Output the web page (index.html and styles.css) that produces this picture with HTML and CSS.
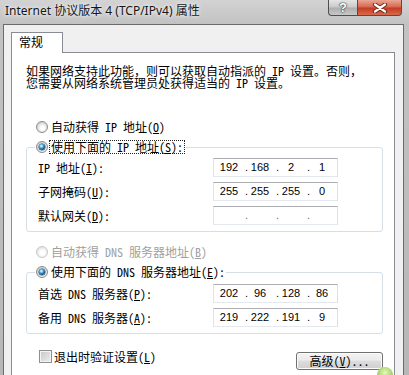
FILE: index.html
```html
<!DOCTYPE html>
<html lang="zh-CN">
<head>
<meta charset="utf-8">
<title>Internet 协议版本 4 (TCP/IPv4) 属性</title>
<link rel="stylesheet" href="styles.css">
</head>
<body>
<div class="window">
  <div class="titlebar">
    <span class="title">Internet 协议版本 4 (TCP/IPv4) 属性</span>
    <div class="caption-buttons">
      <span class="cbtn help">?</span>
      <span class="cbtn close">
        <svg width="16" height="10" viewBox="0 0 16 10"><path d="M3 1.5 L13 8.5 M13 1.5 L3 8.5" stroke="#6a2a1c" stroke-width="4.2" stroke-linecap="round"/><path d="M3 1.5 L13 8.5 M13 1.5 L3 8.5" stroke="#fff" stroke-width="2.2" stroke-linecap="round"/></svg>
      </span>
    </div>
  </div>
  <div class="client">
    <div class="tabs"><span class="tab">常规</span></div>
    <div class="panel">
      <p class="intro">如果网络支持此功能，则可以获取自动指派的 IP 设置。否则，<br>您需要从网络系统管理员处获得适当的 IP 设置。</p>

      <div class="option standalone opt-first"><span class="radio"></span><span>自动获得 IP 地址(<u>O</u>)</span></div>

      <fieldset class="group group-ip">
        <legend class="option legend"><span class="radio checked"></span><span class="focus">使用下面的 IP 地址(<u>S</u>):</span></legend>
        <div class="rows">
          <span class="lbl">IP 地址(<u>I</u>):</span>
          <div class="ipbox"><span>192</span><span class="dot">.</span><span>168</span><span class="dot">.</span><span>2</span><span class="dot">.</span><span>1</span></div>
          <span class="lbl">子网掩码(<u>U</u>):</span>
          <div class="ipbox"><span>255</span><span class="dot">.</span><span>255</span><span class="dot">.</span><span>255</span><span class="dot">.</span><span>0</span></div>
          <span class="lbl">默认网关(<u>D</u>):</span>
          <div class="ipbox empty"><span></span><span class="dot">.</span><span></span><span class="dot">.</span><span></span><span class="dot">.</span><span></span></div>
        </div>
      </fieldset>

      <div class="option standalone opt-dns disabled"><span class="radio"></span><span>自动获得 DNS 服务器地址(<u>B</u>)</span></div>

      <fieldset class="group group-dns">
        <legend class="option legend plain"><span class="radio checked"></span><span>使用下面的 DNS 服务器地址(<u>E</u>):</span></legend>
        <div class="rows">
          <span class="lbl">首选 DNS 服务器(<u>P</u>):</span>
          <div class="ipbox"><span>202</span><span class="dot">.</span><span>96</span><span class="dot">.</span><span>128</span><span class="dot">.</span><span>86</span></div>
          <span class="lbl">备用 DNS 服务器(<u>A</u>):</span>
          <div class="ipbox"><span>219</span><span class="dot">.</span><span>222</span><span class="dot">.</span><span>191</span><span class="dot">.</span><span>9</span></div>
        </div>
      </fieldset>

      <div class="footer">
        <div class="option check-row"><span class="checkbox"></span><span>退出时验证设置(<u>L</u>)</span></div>
        <button class="btn" type="button">高级(<u>V</u>)...</button>
      </div>
    </div>
  </div>
  <span class="blob"></span>
</div>
</body>
</html>
```

FILE: styles.css
```css
* { box-sizing: border-box; }
html, body { margin: 0; padding: 0; }
body {
  width: 409px;
  height: 375px;
  overflow: hidden;
  background: #a4a7aa;
  font-family: "Noto Sans Mono CJK SC", "Noto Sans CJK SC", sans-serif;
  font-size: 12px;
  color: #000;
}
.window {
  position: relative;
  height: 375px;
  display: flex;
  flex-direction: column;
  background: linear-gradient(#d3d3d3, #c2c2c2 24px, #b7b7b7);
}
.titlebar {
  height: 24px;
  flex: none;
  display: flex;
  justify-content: space-between;
  align-items: flex-start;
  padding: 0 7px 0 5px;
}
.title {
  font-family: "Noto Sans", "Noto Sans CJK SC", sans-serif;
  font-size: 12px;
  line-height: 14px;
  margin-top: 4px;
  color: #151515;
  text-shadow: 0 0 5px #f4f4f4, 0 0 3px #f4f4f4;
}
.caption-buttons { display: flex; }
.cbtn {
  height: 16px;
  border: 1px solid #4e4e4e;
  border-top: none;
  display: flex;
  align-items: center;
  justify-content: center;
}
.help {
  width: 29px;
  border-right: none;
  border-radius: 0 0 0 4px;
  background: linear-gradient(#e4e4e4, #cacaca 48%, #adadad 52%, #c8c8c8);
  color: #fff;
  font-family: "Liberation Sans", sans-serif;
  font-weight: bold;
  font-size: 13px;
  line-height: 14px;
  text-shadow: 0 0 1px #333, 0 0 1px #333, 0 0 2px #555;
}
.close {
  width: 45px;
  border-radius: 0 0 4px 0;
  background: linear-gradient(#eaa594, #d7664f 48%, #c33a20 52%, #d9694e);
}
.client {
  flex: 1;
  margin: 0 5px 0 3px;
  border: 1px solid #6c6c6c;
  border-bottom: none;
  background: #f0f0f0;
  padding: 7px 8px 0 7px;
  display: flex;
  flex-direction: column;
  min-height: 0;
}
.tabs { display: flex; height: 20px; flex: none; }
.tab {
  position: relative;
  z-index: 1;
  width: 52px;
  height: 21px;
  border: 1px solid #898c95;
  border-bottom: none;
  background: #fff;
  padding: 1px 0 0 7px;
  line-height: 16px;
}
.panel {
  flex: 1;
  border: 1px solid #898c95;
  border-bottom: none;
  background: #fff;
  padding: 12px 11px 0 14px;
}
.intro { margin: 0; line-height: 12px; white-space: nowrap; }
.option {
  display: flex;
  align-items: center;
  gap: 3px;
  height: 14px;
  line-height: 12px;
  white-space: nowrap;
}
.standalone { margin-left: 10px; }
.opt-first { margin-top: 31px; }
.opt-dns { margin-top: 13px; }
.disabled { color: #a0a0a0; }
.radio {
  position: relative;
  flex: none;
  width: 12px;
  height: 12px;
  border-radius: 50%;
  border: 1px solid #8a8c8e;
  background: radial-gradient(circle at 55% 60%, #ffffff 0 2px, #ececec 3.5px, #cfd0d1 6px);
}
.disabled .radio {
  border-color: #c6c7c8;
  background: radial-gradient(circle at 55% 60%, #ffffff 0 2px, #f3f3f3 4px, #e2e2e2 6px);
}
.radio.checked::after {
  content: "";
  position: absolute;
  left: 2px;
  top: 2px;
  width: 6px;
  height: 6px;
  border-radius: 50%;
  background: radial-gradient(circle at 40% 35%, #b4ecff 0 0.8px, #3d9bd6 2px, #15507f 3.5px);
  box-shadow: 0 0 0 0.5px #1c4a6e;
}
.group {
  margin: 6px 0 0 0;
  padding: 4px 0 6px 0;
  border: 1px solid #d5dfe5;
  border-radius: 3px;
  min-width: 0;
}
.group-dns { padding-top: 5px; }
.legend {
  margin-left: 8px;
  padding: 0 1px;
  gap: 1px;
}
.legend.plain { gap: 3px; }
.focus {
  border: 1px dotted #222;
  padding: 0 1px;
  line-height: 12px;
}
.rows {
  display: grid;
  grid-template-columns: 175px 125px;
  grid-auto-rows: 19px;
  row-gap: 5px;
  align-items: center;
  padding-left: 11px;
}
.lbl { white-space: nowrap; line-height: 12px; }
.ipbox {
  display: grid;
  grid-template-columns: 24px 7px 24px 7px 24px 7px 24px;
  align-items: center;
  height: 19px;
  width: 125px;
  padding: 0 3px;
  border: 1px solid;
  border-color: #abadb3 #dbdfe6 #e3e9ef #e2e3ea;
  font-family: "Liberation Sans", sans-serif;
  font-size: 11px;
  line-height: 13px;
}
.ipbox span { text-align: center; }
.ipbox .dot { text-align: right; }
.ipbox.empty .dot { color: #6d6d6d; }
.footer {
  margin-top: 16px;
  display: flex;
  justify-content: space-between;
  align-items: flex-start;
}
.check-row { margin-left: 13px; height: 13px; gap: 2px; }
.checkbox {
  flex: none;
  width: 13px;
  height: 13px;
  border: 1px solid #8e8f8f;
  background: linear-gradient(135deg, #c4c7ca, #eeeeee);
  box-shadow: inset 0 0 0 1px #f4f4f4;
}
.btn {
  margin: 2px 0 0 0;
  width: 87px;
  height: 18px;
  padding: 0;
  border: 1px solid #707070;
  border-radius: 3px;
  background: linear-gradient(#f3f3f3, #ebebeb 45%, #dddddd 50%, #cfcfcf);
  box-shadow: inset 0 0 0 1px #fbfbfb;
  font-family: inherit;
  font-size: 12px;
  line-height: 14px;
  color: #000;
}
.blob {
  position: absolute;
  left: 377px;
  top: 367px;
  width: 16px;
  height: 16px;
  border-radius: 50%;
  background: radial-gradient(circle at 50% 35%, #e4f6c4, #a6d45f 55%, #86bd3f);
}
```
